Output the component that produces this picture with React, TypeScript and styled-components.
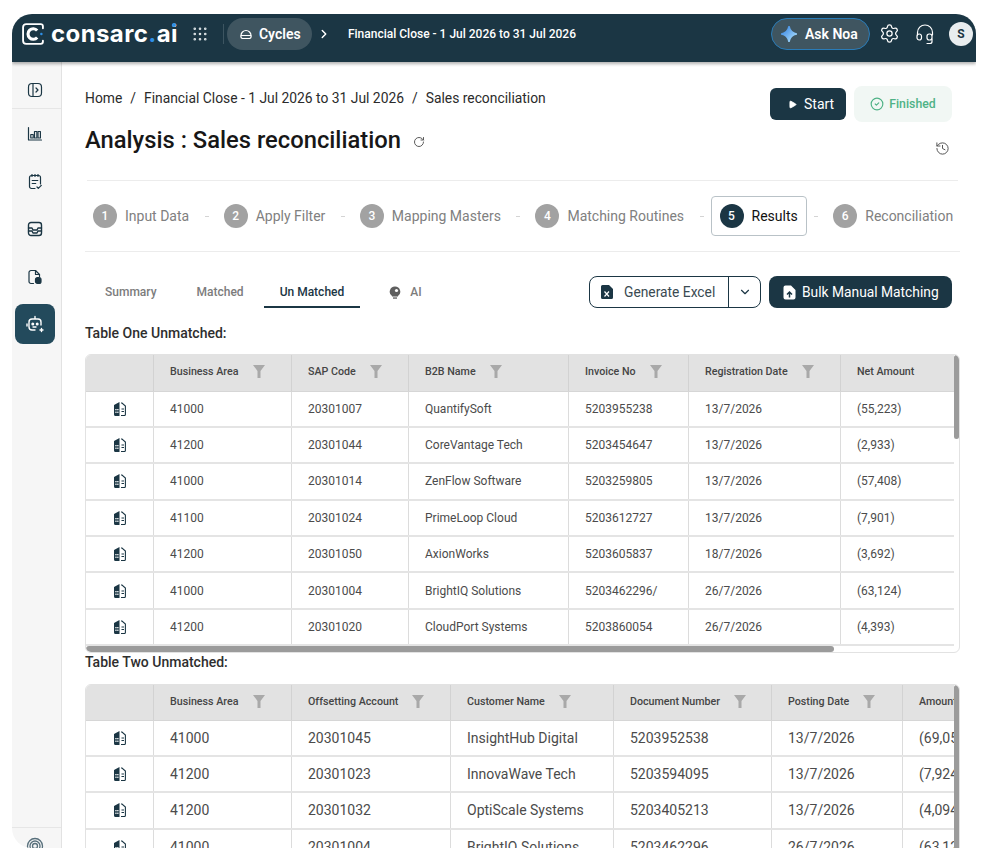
import React from 'react'
import styled, { createGlobalStyle } from 'styled-components'
import { ChevronDown, ChevronRight, Grip, History, Play, RotateCw, Settings, CircleCheck } from 'lucide-react'

const GlobalStyle = createGlobalStyle`
  html, body { margin: 0; padding: 0; background: #fff; }
  body { font-family: Roboto, "Liberation Sans", sans-serif; color: #1c1c1c; }
  * { box-sizing: border-box; }
`

const navy = '#1b3644'

const Page = styled.div`
  width: 988px;
  height: 862px;
  padding: 14px 12px;
  overflow: hidden;
`
const Frame = styled.div`
  width: 964px;
  height: 834px;
  border-radius: 20px 20px 0 20px;
  overflow: hidden;
  display: flex;
  flex-direction: column;
  background: #fff;
`
const TopBar = styled.header`
  height: 48px;
  flex: none;
  background: ${navy};
  display: flex;
  align-items: center;
  padding: 0 3px 9px 9px;
  color: #fff;
  box-shadow: 0 2px 3px rgba(0, 0, 0, 0.3);
  position: relative;
  z-index: 2;
`
const LogoText = styled.span`
  font-family: Inter, Roboto, sans-serif;
  font-weight: 700;
  font-size: 24px;
  letter-spacing: 0.4px;
  margin-left: 6px;
  position: relative;
  & > b { color: #2e8fe6; font-weight: 700; }
  & > i {
    position: absolute;
    right: 2px;
    top: 4px;
    width: 4px;
    height: 4px;
    border-radius: 50%;
    background: #2e8fe6;
  }
`
const GripBox = styled.span`
  display: flex;
  margin-left: 13px;
  color: #dfe6e9;
`
const BarDivider = styled.span`
  width: 1px;
  height: 20px;
  margin: 0 3px 0 14px;
  background: #3d5561;
`
const CyclesPill = styled.div`
  height: 32px;
  width: 85px;
  border-radius: 16px;
  background: #3f5560;
  display: flex;
  align-items: center;
  gap: 6px;
  padding-left: 12px;
  font-size: 14px;
  font-weight: 600;
`
const Crumb = styled.span`
  font-size: 12px;
  font-weight: 500;
  margin-left: 17px;
`
const BarRight = styled.div`
  margin-left: auto;
  display: flex;
  align-items: center;
`
const AskPill = styled.div`
  width: 99px;
  height: 32px;
  border-radius: 16px;
  background: #3f5560;
  border: 1px solid #2a7cb8;
  display: flex;
  align-items: center;
  gap: 8px;
  padding-left: 9px;
  font-size: 14px;
  font-weight: 600;
`
const BarIcon = styled.span`
  display: flex;
  margin-left: ${p => p.$gap}px;
`
const Avatar = styled.span`
  width: 24px;
  height: 24px;
  margin-left: 14px;
  border-radius: 50%;
  background: #e9edef;
  color: ${navy};
  font-size: 12px;
  font-weight: 700;
  display: flex;
  align-items: center;
  justify-content: center;
`
const Body = styled.div`
  flex: 1;
  min-height: 0;
  display: flex;
`
const Sidebar = styled.aside`
  width: 50px;
  flex: none;
  background: #f6f6f6;
  border-right: 1px solid #e2e2e2;
  display: flex;
  flex-direction: column;
  align-items: center;
  color: ${navy};
`
const SideToggle = styled.div`
  width: 100%;
  height: 47px;
  flex: none;
  border-bottom: 1px solid #e6e6e6;
  display: flex;
  align-items: center;
  justify-content: center;
  padding: 9px 3px 0 0;
`
const SideList = styled.div`
  margin: 5px 3px 0 0;
  display: flex;
  flex-direction: column;
  gap: 7.5px;
`
const SideItem = styled.div`
  width: 40px;
  height: 40px;
  border-radius: 8px;
  display: flex;
  align-items: center;
  justify-content: center;
  background: ${p => (p.$active ? '#234a5c' : 'transparent')};
  color: ${p => (p.$active ? '#fff' : navy)};
`
const SideFoot = styled.div`
  margin-top: auto;
  width: 100%;
  height: 21px;
  flex: none;
  border-top: 1px solid #e6e6e6;
  display: flex;
  justify-content: center;
  padding: 9px 3px 0 0;
  color: #58707c;
`
const Main = styled.main`
  flex: 1;
  min-width: 0;
  padding: 26px 16px 0 23px;
  overflow: hidden;
`
const HeadRow = styled.div`
  display: flex;
  justify-content: space-between;
  height: 93px;
  border-bottom: 1px solid #ececec;
  margin-left: 2px;
  margin-right: 2px;
`
const HeadLeft = styled.div`
  margin-left: -2px;
`
const Breadcrumb = styled.div`
  font-size: 13.85px;
  line-height: 20px;
  color: #2b2b2b;
  & > span { margin: 0 8px; }
`
const Title = styled.h1`
  margin: 17px 0 0;
  font-size: 23.75px;
  line-height: 30px;
  font-weight: 500;
  color: #171717;
  display: flex;
  align-items: center;
  gap: 12px;
  & > svg { color: #5c5c5c; margin-top: 3px; }
`
const HeadRight = styled.div`
  display: flex;
  flex-direction: column;
  align-items: flex-end;
  padding-right: 6px;
  margin-top: -2px;
`
const HeadActions = styled.div`
  display: flex;
  align-items: center;
  gap: 8px;
`
const StartButton = styled.div`
  width: 76px;
  height: 32px;
  border-radius: 6px;
  background: ${navy};
  color: #fff;
  font-size: 14px;
  display: flex;
  align-items: center;
  gap: 7px;
  padding-left: 18px;
`
const FinishedTag = styled.div`
  width: 98px;
  height: 36px;
  border-radius: 8px;
  background: #f1f7f4;
  color: #4fb286;
  font-size: 12.3px;
  font-weight: 500;
  display: flex;
  align-items: center;
  justify-content: center;
  gap: 5px;
`
const HistoryIcon = styled.span`
  display: flex;
  margin: 19px 2px 0 0;
  color: #555;
`
const Steps = styled.div`
  height: 71px;
  display: flex;
  align-items: center;
  border-bottom: 1px solid #ececec;
`
const Step = styled.div`
  height: 40px;
  padding: 0 8px;
  display: flex;
  align-items: center;
  gap: 8px;
  font-size: 14px;
  white-space: nowrap;
  color: ${p => (p.$active ? '#111' : '#808080')};
  border-radius: 4px;
  border: 1px solid ${p => (p.$active ? '#b9c2c7' : 'transparent')};
  margin: ${p => (p.$active ? '0' : '0 -1px')};
`
const StepNum = styled.span`
  width: 24px;
  height: 24px;
  border-radius: 50%;
  background: ${p => (p.$active ? navy : '#a2a2a2')};
  color: #fff;
  font-size: 12px;
  font-weight: 500;
  display: flex;
  align-items: center;
  justify-content: center;
`
const StepDash = styled.span`
  width: 4px;
  height: 1px;
  flex: none;
  background: #d4d4d4;
  margin: 0 7px 0 7.5px;
`
const TabRow = styled.div`
  height: 72px;
  padding: 24px 8px 0 0;
  display: flex;
  justify-content: space-between;
  align-items: flex-start;
`
const Tabs = styled.div`
  display: flex;
`
const Tab = styled.div`
  height: 32px;
  padding: 2px ${p => (p.$active ? 16 : 20)}px 0;
  margin-left: ${p => p.$offset || 0}px;
  display: flex;
  align-items: center;
  gap: 9px;
  font-size: 12px;
  font-weight: 500;
  color: ${p => (p.$active ? navy : '#7c7c7c')};
  border-bottom: 2px solid ${p => (p.$active ? navy : 'transparent')};
`
const Actions = styled.div`
  display: flex;
  gap: 8px;
`
const SplitButton = styled.div`
  height: 32px;
  border: 1px solid ${navy};
  border-radius: 8px;
  display: flex;
  color: #3a4a52;
  font-size: 13.8px;
`
const SplitMain = styled.div`
  width: 139px;
  display: flex;
  align-items: center;
  gap: 11px;
  padding-left: 11px;
  border-right: 1px solid ${navy};
`
const SplitArrow = styled.div`
  width: 31px;
  display: flex;
  align-items: center;
  justify-content: center;
  color: ${navy};
`
const BulkButton = styled.div`
  width: 183px;
  height: 32px;
  border-radius: 8px;
  background: ${navy};
  color: #fff;
  font-size: 13.8px;
  display: flex;
  align-items: center;
  gap: 6px;
  padding-left: 14px;
`
const SectionTitle = styled.div`
  font-size: 14px;
  font-weight: 500;
  line-height: 18px;
  color: #2e2e2e;
  margin-bottom: ${p => p.$gap}px;
`
const TableBox = styled.div`
  position: relative;
  width: 875px;
  height: ${p => p.$height}px;
  border: 1px solid #e2e2e2;
  border-radius: 6px;
  overflow: hidden;
`
const TableInner = styled.div`
  width: 868px;
  overflow: hidden;
`
const Row = styled.div`
  display: grid;
  grid-template-columns: ${p => p.$cols};
  height: ${p => p.$height}px;
  border-bottom: 2px solid #e4e4e4;
  background: #fff;
`
const HeadCells = styled(Row)`
  background: #e2e2e2;
  border-bottom: 1px solid #d6d6d6;
`
const HeadCell = styled.div`
  display: flex;
  align-items: center;
  gap: 14px;
  padding: 0 0 2px 16px;
  font-size: 10.7px;
  font-weight: 500;
  color: #454545;
  white-space: nowrap;
  overflow: hidden;
  border-right: 1px solid #d2d2d2;
  &:last-child { border-right: 0; }
`
const Cell = styled.div`
  display: flex;
  align-items: center;
  padding-left: 16px;
  font-size: ${p => p.$size}px;
  color: #4b4b4b;
  white-space: nowrap;
  overflow: hidden;
  border-right: 1px solid #dcdcdc;
  &:last-child { border-right: 0; }
`
const IconCell = styled(Cell)`
  padding: 0;
  justify-content: center;
  color: ${navy};
`
const ScrollY = styled.div`
  position: absolute;
  top: 0;
  right: 0;
  width: 5px;
  height: ${p => p.$length}px;
  background: #9b9b9b;
  border-radius: 3px;
`
const ScrollX = styled.div`
  position: absolute;
  left: 0;
  bottom: 0;
  height: 6px;
  width: 748px;
  background: #9b9b9b;
  border-radius: 3px;
`

const IconSvg = ({ w = 16, h = 16, box = '0 0 16 16', children }: { w?: number; h?: number; box?: string; children: React.ReactNode }) => (
  <svg width={w} height={h} viewBox={box} fill="none" stroke="currentColor" strokeWidth="1.2" strokeLinecap="round" strokeLinejoin="round">
    {children}
  </svg>
)

const LogoMark = () => (
  <svg width="24" height="24" viewBox="0 0 23 23" fill="none">
    <path d="M19 2H5a3 3 0 0 0-3 3v13a3 3 0 0 0 3 3h14a2 2 0 0 0 2-2v-1M21 6V4a2 2 0 0 0-2-2" stroke="#fff" strokeWidth="1.8" strokeLinecap="round" />
    <path d="M15.5 8.200a5 5 0 1 0 0 6.600" stroke="#fff" strokeWidth="3" />
    <circle cx="19.500" cy="11.500" r="1.200" fill="#2e8fe6" />
  </svg>
)
const HomeDome = () => (
  <IconSvg w={14} h={14} box="0 0 14 14">
    <path d="M2 8.500a5 5 0 0 1 10 0M1.800 8.500c0 2.500.6 3 1.700 3h7c1.100 0 1.700-.5 1.700-3z" />
  </IconSvg>
)
const Sparkle = () => (
  <svg width="16" height="16" viewBox="0 0 16 16">
    <defs>
      <linearGradient id="noa" x1="0" y1="0" x2="1" y2="1">
        <stop offset="0" stopColor="#2f7fe0" />
        <stop offset="1" stopColor="#b5e6ff" />
      </linearGradient>
    </defs>
    <path d="M8 .5C8.800 4.500 11.500 7.200 15.500 8 11.500 8.800 8.800 11.500 8 15.500 7.200 11.500 4.500 8.800 .5 8 4.500 7.200 7.200 4.500 8 .5z" fill="url(#noa)" stroke="url(#noa)" strokeWidth="1.600" strokeLinejoin="round" />
  </svg>
)
const Headset = () => (
  <IconSvg w={20} h={22} box="0 0 20 22">
    <path d="M2.500 12V9.500a7.500 7.500 0 0 1 15 0V12" />
    <rect x="2" y="11" width="4.500" height="6" rx="2.200" />
    <rect x="12" y="11" width="5" height="6" rx="2.200" />
    <path d="M17 16v2.500a2 2 0 0 1-2 2h-3" />
  </IconSvg>
)
const PanelIcon = () => (
  <IconSvg>
    <rect x="1.500" y="1.500" width="13" height="13" rx="3.500" />
    <path d="M6 1.500v13M9 6l2 2-2 2" />
  </IconSvg>
)
const ChartIcon = () => (
  <IconSvg>
    <path d="M1.500 1.500v12.500h13" />
    <rect x="3.800" y="8.500" width="2.400" height="3.500" />
    <rect x="7.500" y="5.500" width="2.400" height="6.500" />
    <rect x="11" y="5.500" width="2.400" height="6.500" />
  </IconSvg>
)
const NotesIcon = () => (
  <IconSvg>
    <path d="M8 14.500H4.500a2 2 0 0 1-2-2v-9a2 2 0 0 1 2-2h7a2 2 0 0 1 2 2v6.500" />
    <path d="M5 .5v2M8 .5v2M11 .5v2M5.200 6.500h5.600M5.200 9.500h3.500M10 13l1.300 1.300 3-3" />
  </IconSvg>
)
const InboxIcon = () => (
  <IconSvg>
    <rect x="1.500" y="1.500" width="13" height="13" rx="2.500" strokeWidth="1.400" />
    <path d="M1.500 7h3.500l1 2h4l1-2h3.500M1.500 10h3.500l1 2h4l1-2h3.500" strokeWidth="1.400" />
  </IconSvg>
)
const FileDbIcon = () => (
  <IconSvg>
    <path d="M6.500 14.500H4a2 2 0 0 1-2-2v-9a2 2 0 0 1 2-2h4.500l4 4v2" />
    <path d="M8.500 1.500v4h4" />
    <rect x="8.500" y="8.500" width="5.500" height="6" rx="2" fill="currentColor" />
  </IconSvg>
)
const BotIcon = () => (
  <IconSvg w={18} h={18} box="0 0 18 18">
    <path d="M9 1.500v2.500M9 15H6a3 3 0 0 1-3-3V7a3 3 0 0 1 3-3h6a3 3 0 0 1 3 3v3" strokeWidth="1.400" />
    <path d="M1 9v2M14 15h3M15.500 13.500v3" strokeWidth="1.400" />
    <circle cx="6.800" cy="9" r=".9" fill="currentColor" />
    <circle cx="11.200" cy="9" r=".9" fill="currentColor" />
    <path d="M7 12h3" strokeWidth="1.400" />
  </IconSvg>
)
const RingIcon = () => (
  <IconSvg w={18} h={18} box="0 0 18 18">
    <circle cx="9" cy="9" r="7.500" strokeWidth="1.300" />
    <circle cx="9" cy="9" r="5" strokeWidth="1.300" />
    <circle cx="9" cy="9" r="2.500" strokeWidth="1.300" />
  </IconSvg>
)
const ExcelIcon = () => (
  <svg width="12" height="14" viewBox="0 0 12 14">
    <path d="M1.500 0H8l4 4v8.500a1.500 1.500 0 0 1-1.500 1.500h-9A1.500 1.500 0 0 1 0 12.500v-11A1.500 1.500 0 0 1 1.500 0z" fill={navy} />
    <path d="M3.500 6.500 8 11.500M8 6.500 3.500 11.500" stroke="#fff" strokeWidth="1.200" />
  </svg>
)
const UploadFileIcon = () => (
  <svg width="13" height="15" viewBox="0 0 13 15">
    <path d="M2 .5h6L12.500 5v7.500a2 2 0 0 1-2 2h-8a2 2 0 0 1-2-2v-10a2 2 0 0 1 2-2z" fill="#fff" />
    <path d="M6.500 12.500v-5M4 9.500l2.500-2.500L9 9.500" stroke={navy} strokeWidth="1.500" fill="none" />
  </svg>
)
const BulbIcon = () => (
  <svg width="12" height="13" viewBox="0 0 12 13">
    <path d="M6 .5a5.200 5.200 0 0 1 3 9.500v.5H3V10A5.200 5.200 0 0 1 6 .5z" fill="#5f5f5f" />
    <circle cx="7.500" cy="4.500" r="1.600" fill="#fff" />
    <rect x="4" y="11.400" width="4" height="1.300" fill="#5f5f5f" />
  </svg>
)
const FunnelIcon = () => (
  <svg width="12" height="13" viewBox="0 0 12 13">
    <path d="M0 0h12L7.500 6v7h-3V6z" fill="#a9a9a9" />
  </svg>
)
const RowIcon = () => (
  <svg width="12" height="14" viewBox="0 0 12 14">
    <path d="M5.500 0v14H1.500A1.500 1.500 0 0 1 0 12.500V3z" fill={navy} />
    <rect x="1.300" y="7" width="1.300" height="1.300" fill="#fff" />
    <rect x="3.200" y="7" width="1.300" height="1.300" fill="#fff" />
    <rect x="1.300" y="9.600" width="1.300" height="1.300" fill="#fff" />
    <rect x="3.200" y="9.600" width="1.300" height="1.300" fill="#fff" />
    <path d="M7 1h1l3.400 3v8.500a1 1 0 0 1-1 1H7" stroke={navy} strokeWidth="1.100" fill="none" />
    <path d="M7.500 7h2.500M7.500 9.500h2.500" stroke={navy} strokeWidth="1.100" />
  </svg>
)

const stepNames = ['Input Data', 'Apply Filter', 'Mapping Masters', 'Matching Routines', 'Results', 'Reconciliation']

const tableOneCols = '68px 138px 117px 160px 120px 152px 113px'
const tableOneHead = ['Business Area', 'SAP Code', 'B2B Name', 'Invoice No', 'Registration Date', 'Net Amount']
const tableOneRows = [
  ['41000', '20301007', 'QuantifySoft', '5203955238', '13/7/2026', '(55,223)'],
  ['41200', '20301044', 'CoreVantage Tech', '5203454647', '13/7/2026', '(2,933)'],
  ['41000', '20301014', 'ZenFlow Software', '5203259805', '13/7/2026', '(57,408)'],
  ['41100', '20301024', 'PrimeLoop Cloud', '5203612727', '13/7/2026', '(7,901)'],
  ['41200', '20301050', 'AxionWorks', '5203605837', '18/7/2026', '(3,692)'],
  ['41000', '20301004', 'BrightIQ Solutions', '5203462296/', '26/7/2026', '(63,124)'],
  ['41200', '20301020', 'CloudPort Systems', '5203860054', '26/7/2026', '(4,393)'],
]
const tableTwoCols = '68px 138px 159px 163px 158px 131px 51px'
const tableTwoHead = ['Business Area', 'Offsetting Account', 'Customer Name', 'Document Number', 'Posting Date', 'Amount']
const tableTwoRows = [
  ['41000', '20301045', 'InsightHub Digital', '5203952538', '13/7/2026', '(69,051)'],
  ['41200', '20301023', 'InnovaWave Tech', '5203594095', '13/7/2026', '(7,924)'],
  ['41200', '20301032', 'OptiScale Systems', '5203405213', '13/7/2026', '(4,094)'],
  ['41000', '20301004', 'BrightIQ Solutions', '5203462296', '26/7/2026', '(63,124)'],
]

const DataTable = ({ cols, head, rows, size, headHeight }: { cols: string; head: string[]; rows: string[][]; size: number; headHeight: number }) => (
  <TableInner>
    <HeadCells $cols={cols} $height={headHeight}>
      <HeadCell />
      {head.map((h, i) => (
        <HeadCell key={h}>
          {h}
          {i < 5 && <FunnelIcon />}
        </HeadCell>
      ))}
    </HeadCells>
    {rows.map((r, i) => (
      <Row key={i} $cols={cols} $height={36.4}>
        <IconCell $size={size}><RowIcon /></IconCell>
        {r.map((c, j) => (
          <Cell key={j} $size={size}>{c}</Cell>
        ))}
      </Row>
    ))}
  </TableInner>
)

const App = () => (
  <Page>
    <GlobalStyle />
    <Frame>
      <TopBar>
        <LogoMark />
        <LogoText>consarc<b>.</b>ai<i /></LogoText>
        <GripBox><Grip size={18} strokeWidth={1.5} /></GripBox>
        <BarDivider />
        <CyclesPill><HomeDome />Cycles</CyclesPill>
        <BarIcon $gap={5}><ChevronRight size={14} strokeWidth={2.5} /></BarIcon>
        <Crumb>Financial Close - 1 Jul 2026 to 31 Jul 2026</Crumb>
        <BarRight>
          <AskPill><Sparkle />Ask Noa</AskPill>
          <BarIcon $gap={9}><Settings size={21} strokeWidth={1.4} /></BarIcon>
          <BarIcon $gap={15}><Headset /></BarIcon>
          <Avatar>S</Avatar>
        </BarRight>
      </TopBar>
      <Body>
        <Sidebar>
          <SideToggle><PanelIcon /></SideToggle>
          <SideList>
            <SideItem><ChartIcon /></SideItem>
            <SideItem><NotesIcon /></SideItem>
            <SideItem><InboxIcon /></SideItem>
            <SideItem><FileDbIcon /></SideItem>
            <SideItem $active><BotIcon /></SideItem>
          </SideList>
          <SideFoot><RingIcon /></SideFoot>
        </Sidebar>
        <Main>
          <HeadRow>
            <HeadLeft>
              <Breadcrumb>Home<span>/</span>Financial Close - 1 Jul 2026 to 31 Jul 2026<span>/</span>Sales reconciliation</Breadcrumb>
              <Title>Analysis : Sales reconciliation <RotateCw size={12} strokeWidth={2} /></Title>
            </HeadLeft>
            <HeadRight>
              <HeadActions>
                <StartButton><Play size={9} fill="#fff" strokeWidth={2} />Start</StartButton>
                <FinishedTag><CircleCheck size={14} strokeWidth={2} />Finished</FinishedTag>
              </HeadActions>
              <HistoryIcon><History size={15} strokeWidth={1.6} /></HistoryIcon>
            </HeadRight>
          </HeadRow>
          <Steps>
            {stepNames.map((name, i) => (
              <React.Fragment key={name}>
                {i > 0 && <StepDash />}
                <Step $active={i === 4}>
                  <StepNum $active={i === 4}>{i + 1}</StepNum>
                  {name}
                </Step>
              </React.Fragment>
            ))}
          </Steps>
          <TabRow>
            <Tabs>
              <Tab>Summary</Tab>
              <Tab>Matched</Tab>
              <Tab $active>Un Matched</Tab>
              <Tab $offset={9}><BulbIcon />AI</Tab>
            </Tabs>
            <Actions>
              <SplitButton>
                <SplitMain><ExcelIcon />Generate Excel</SplitMain>
                <SplitArrow><ChevronDown size={14} strokeWidth={2} /></SplitArrow>
              </SplitButton>
              <BulkButton><UploadFileIcon />Bulk Manual Matching</BulkButton>
            </Actions>
          </TabRow>
          <SectionTitle $gap={12}>Table One Unmatched:</SectionTitle>
          <TableBox $height={299}>
            <DataTable cols={tableOneCols} head={tableOneHead} rows={tableOneRows} size={12} headHeight={36.5} />
            <ScrollY $length={84} />
            <ScrollX />
          </TableBox>
          <SectionTitle $gap={13}>Table Two Unmatched:</SectionTitle>
          <TableBox $height={200}>
            <DataTable cols={tableTwoCols} head={tableTwoHead} rows={tableTwoRows} size={14} headHeight={35.5} />
            <ScrollY $length={200} />
          </TableBox>
        </Main>
      </Body>
    </Frame>
  </Page>
)

export default App
